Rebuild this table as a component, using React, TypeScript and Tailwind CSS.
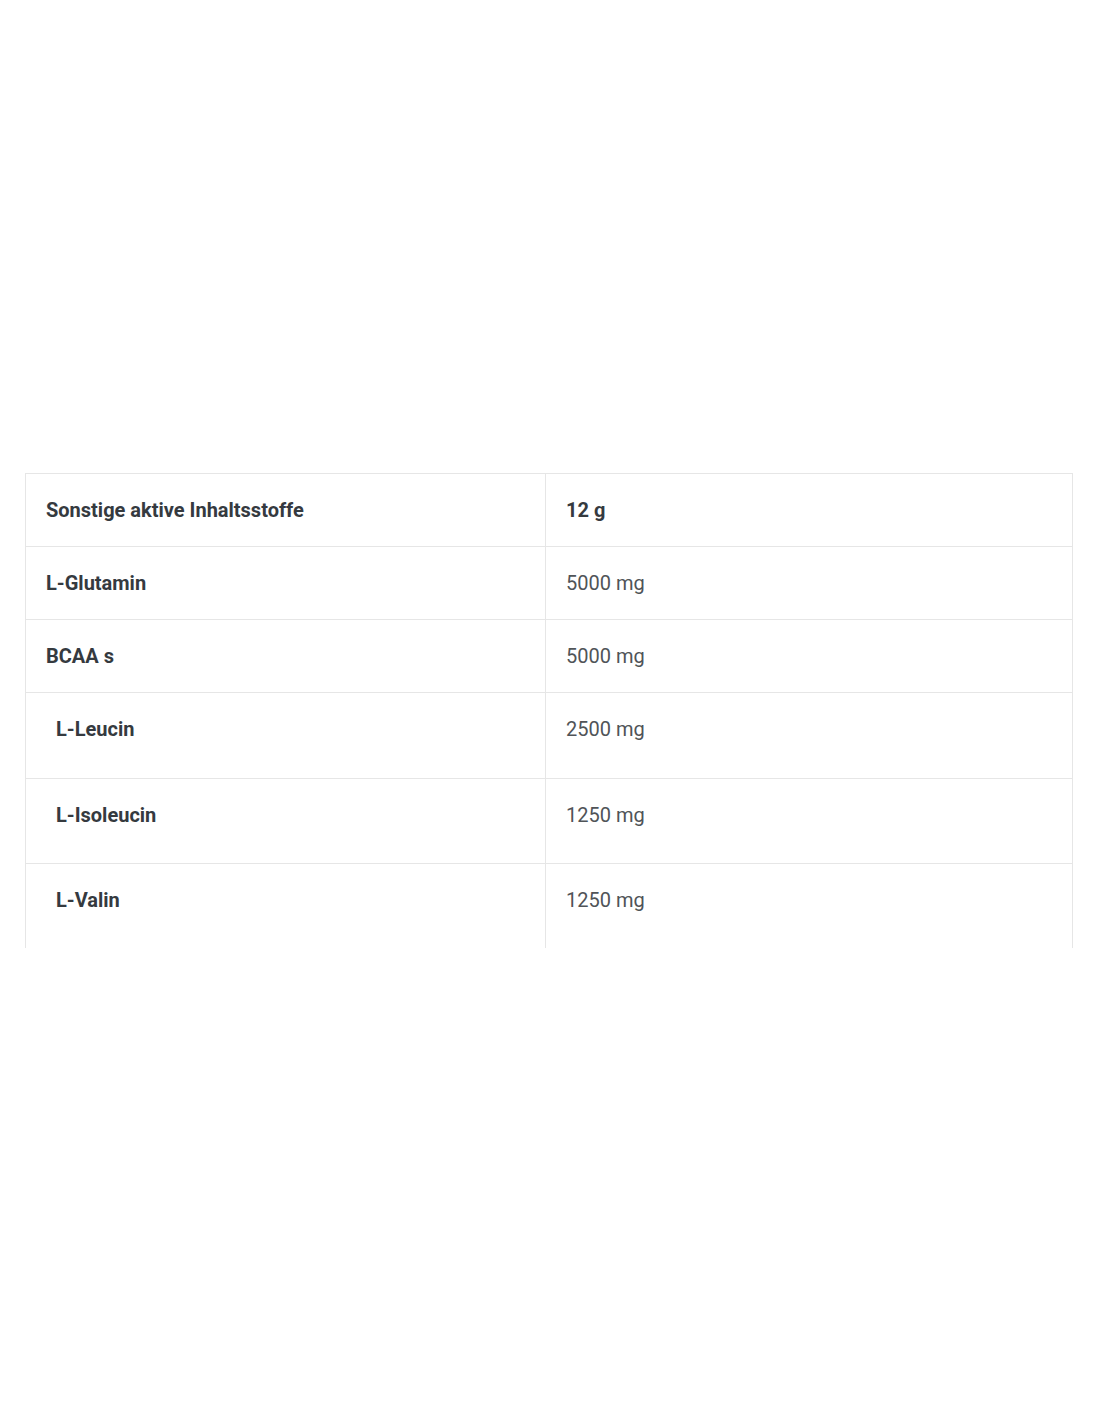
import React from 'react'

interface Row {
  name: string
  value: string
  sub?: boolean
  strongValue?: boolean
}

const rows: Row[] = [
  { name: 'Sonstige aktive Inhaltsstoffe', value: '12 g', strongValue: true },
  { name: 'L-Glutamin', value: '5000 mg' },
  { name: 'BCAA s', value: '5000 mg' },
  { name: 'L-Leucin', value: '2500 mg', sub: true },
  { name: 'L-Isoleucin', value: '1250 mg', sub: true },
  { name: 'L-Valin', value: '1250 mg', sub: true },
]

export default function App() {
  return (
    <div className="min-h-[1422px] w-[1100px] bg-white pt-[473px] font-['Roboto',sans-serif]">
      <div className="mx-[25px] w-[1048px] border-t border-[#e6e6e6]">
        {rows.map((row, i) => (
          <div
            key={row.name}
            className={
              'grid grid-cols-[521px_1fr] ' +
              (i < rows.length - 1 ? 'border-b border-[#e6e6e6]' : '')
            }
          >
            <div
              className={
                'border-x border-[#e6e6e6] pr-5 pt-[23px] text-[20px] leading-[26px] font-bold text-[#353a3f] ' +
                (row.sub ? (i === 3 ? 'h-[85px] pl-[30px]' : 'h-[84px] pl-[30px]') : 'h-[72px] pl-5')
              }
            >
              {row.name}
            </div>
            <div
              className={
                'border-r border-[#e6e6e6] pl-5 pt-[23px] text-[20px] leading-[26px] ' +
                (row.strongValue ? 'font-bold text-[#353a3f]' : 'text-[#505458]')
              }
            >
              {row.value}
            </div>
          </div>
        ))}
      </div>
    </div>
  )
}
